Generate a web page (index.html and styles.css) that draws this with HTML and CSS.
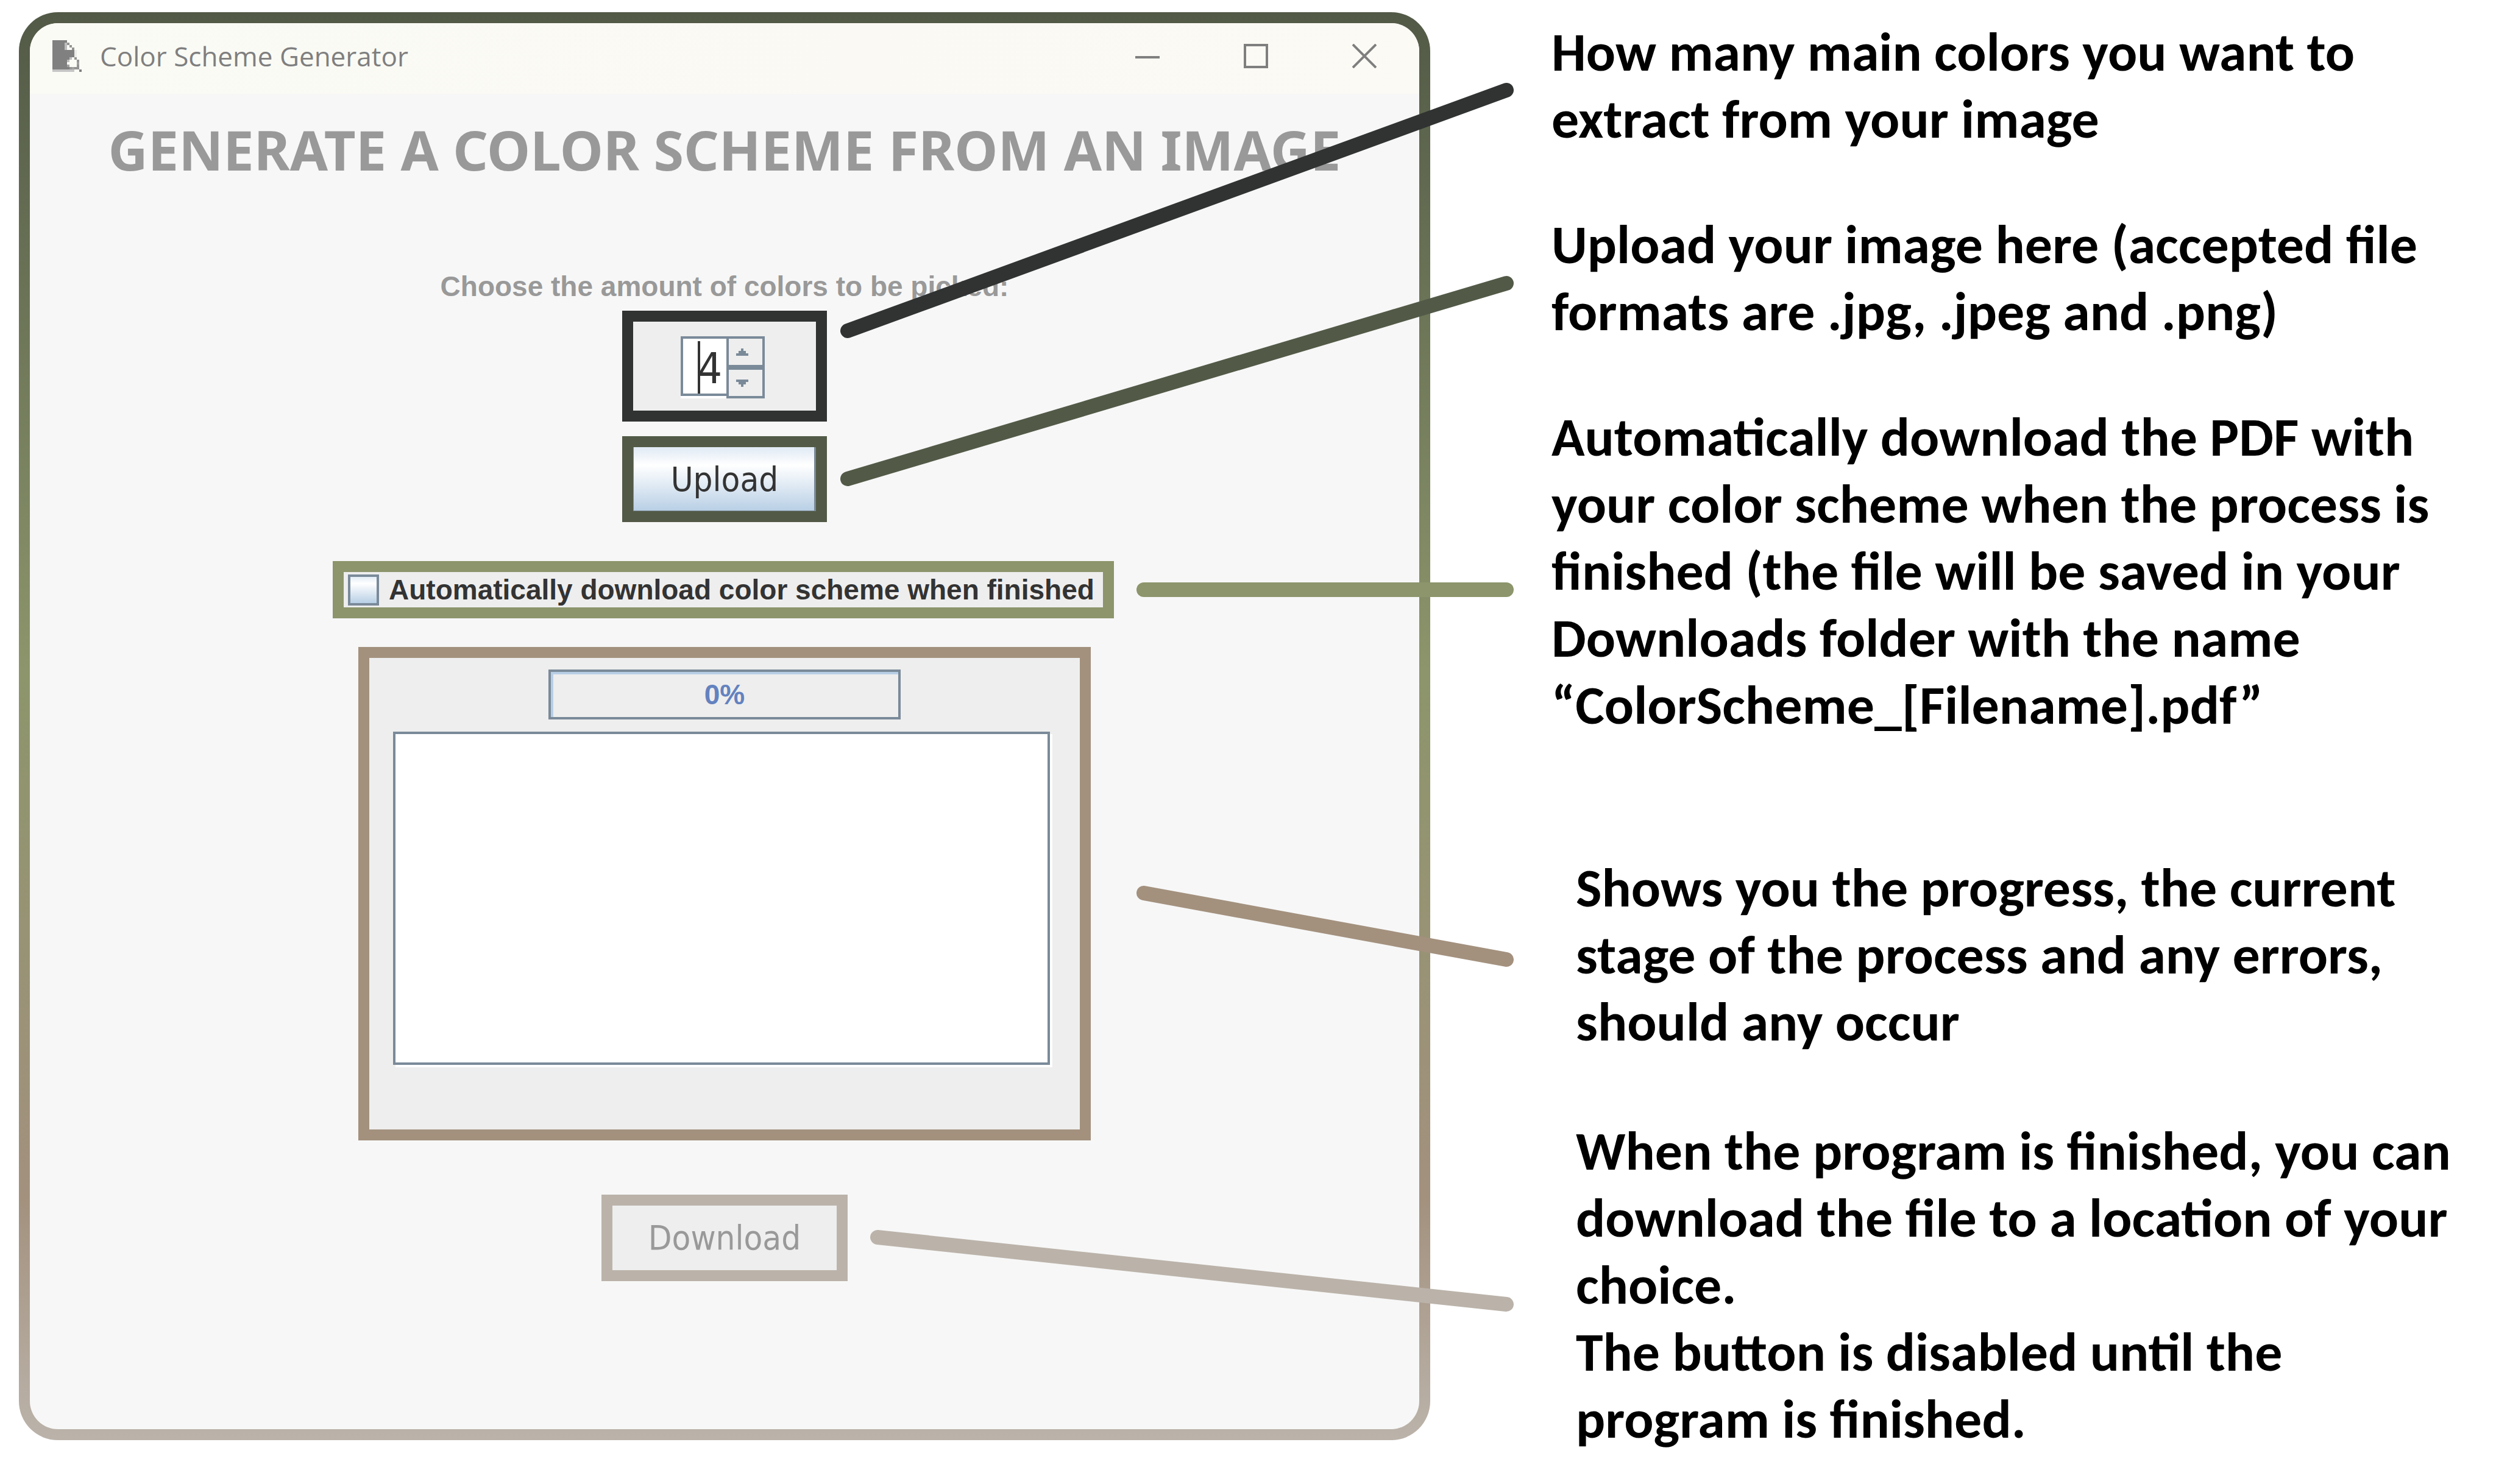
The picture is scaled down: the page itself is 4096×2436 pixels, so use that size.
FILE: index.html
```html
<!DOCTYPE html>
<html lang="en">
<head>
<meta charset="utf-8">
<title>Color Scheme Generator</title>
<link rel="stylesheet" href="styles.css">
</head>
<body>
<main class="guide">
  <section class="frame">
    <div class="window">
      <header class="titlebar">
        <svg class="app-icon" viewBox="0 0 12 13" shape-rendering="crispEdges" aria-hidden="true">
          <path fill="#808080" d="M0 0H6V1H5V4H9V7H7V8H6V11H7V12H0Z"/>
          <path fill="#949494" d="M6 1h1v1H6ZM7 2h1v1H7ZM8 3h1v1H8ZM9 7h1v1H9ZM10 8h1v1h-1ZM10 10h1v1h-1ZM9 11h2v1H9ZM7 11h1v1H7Z"/>
          <path fill="#a2a2a2" d="M10 9h1v1h-1ZM6 10h1v1H6ZM8 11h1v1H8Z"/>
          <path fill="#bdbdbd" d="M5 1h1v3H5ZM7 7h1v1H7ZM6 8h1v1H6Z"/>
          <path fill="#c5c5c5" d="M0 12h9v1H0Z"/>
          <path fill="#ebebe8" d="M9 4h1v3H9Z"/>
          <path fill="#808080" d="M11 12h1v1h-1Z"/>
        </svg>
        <span class="app-name">Color Scheme Generator</span>
        <button class="win-btn" type="button" aria-label="Minimize"><svg viewBox="0 0 40 40"><path d="M0 22H40"/></svg></button>
        <button class="win-btn" type="button" aria-label="Maximize"><svg viewBox="0 0 40 40"><path d="M2 2H38V38H2Z"/></svg></button>
        <button class="win-btn" type="button" aria-label="Close"><svg viewBox="0 0 40 40"><path d="M1 1L39 39M39 1L1 39"/></svg></button>
      </header>
      <form class="content">
        <h1 class="heading">GENERATE A COLOR SCHEME FROM AN IMAGE</h1>
        <label class="amount-label" for="amount">Choose the amount of colors to be picked:</label>
        <div class="mark mark-amount">
          <div class="spinner">
            <div class="spinner-field"><input id="amount" type="text" value="4"></div>
            <div class="spinner-steps">
              <button type="button" aria-label="More"><svg viewBox="0 0 5 3" shape-rendering="crispEdges"><path d="M2 0h1v1h1v1h1v1H0V2h1V1h1Z"/></svg></button>
              <button type="button" aria-label="Fewer"><svg viewBox="0 0 5 3" shape-rendering="crispEdges"><path d="M0 0h5v1H4v1H3v1H2V2H1V1H0Z"/></svg></button>
            </div>
          </div>
        </div>
        <button class="mark upload" type="button">Upload</button>
        <div class="mark mark-auto">
          <input class="check" id="auto" type="checkbox">
          <label for="auto">Automatically download color scheme when finished</label>
        </div>
        <div class="mark mark-progress">
          <div class="progress" role="progressbar" aria-label="Progress" aria-valuenow="0">0%</div>
          <textarea class="log" aria-label="Log" readonly></textarea>
        </div>
        <button class="mark download" type="button" disabled>Download</button>
      </form>
    </div>
  </section>
  <section class="notes">
    <p>How many main colors you want to extract from your image</p>
    <p>Upload your image here (accepted file formats are .jpg, .jpeg and .png)</p>
    <p>Automatically download the PDF with your color scheme when the process is finished (the file will be saved in your Downloads folder with the name “ColorScheme_[Filename].pdf”</p>
    <p class="note-progress">Shows you the progress, the current stage of the process and any errors, should any occur</p>
    <p class="note-download">When the program is finished, you can download the file to a location of your choice.<br>The button is disabled until the program is finished.</p>
  </section>
  <svg class="pointers" viewBox="0 0 4096 2436" aria-hidden="true">
    <path stroke="#303332" d="M1391 543L2472 148"/>
    <path stroke="#525a47" d="M1391 786L2472 465"/>
    <path stroke="#8c956b" d="M1877 968H2472"/>
    <path stroke="#a3917e" d="M1877 1466L2472 1575"/>
    <path stroke="#bbb3aa" d="M1440 2031L2472 2141"/>
  </svg>
</main>
</body>
</html>
```
FILE: styles.css
```css
* { box-sizing: border-box; }

body {
  margin: 0;
  background: #fff;
}

button, input, textarea {
  margin: 0;
  padding: 0;
  border: 0;
  border-radius: 0;
  outline: 0;
  appearance: none;
  resize: none;
}

.guide {
  position: relative;
  display: grid;
  grid-template-columns: minmax(0, 2316fr) minmax(0, 1749fr);
  padding: 20px 0 50px 31px;
}

.frame {
  align-self: start;
  padding: 18px;
  border-radius: 64px;
  background: linear-gradient(#525a47 0%, #8c956b 46%, #a3917e 83%, #bbb3aa 100%);
}

.window {
  overflow: hidden;
  border-radius: 46px;
  background: #f7f7f7;
}

.titlebar {
  display: flex;
  align-items: center;
  gap: 138px;
  height: 116px;
  padding: 0 70px 8px 37px;
  background: linear-gradient(90deg, #fafbf5, #fbf9f4 60%, #fbfaf4);
}

.app-icon {
  width: 48px;
  height: 52px;
  margin-right: -108px;
}

.app-name {
  flex: 1;
  color: #7f7f7f;
  font: 44px/64px "Open Sans", sans-serif;
}

.win-btn {
  width: 40px;
  height: 40px;
  background: none;
}

.win-btn svg {
  display: block;
  fill: none;
  stroke: #7f7f7f;
  stroke-width: 4;
}

.content {
  display: flex;
  flex-direction: column;
  align-items: center;
  padding: 31px 0 243px;
}

.heading {
  margin: 0;
  color: #999;
  font: bold 90px/120px "Noto Sans", sans-serif;
  white-space: nowrap;
}

.amount-label {
  margin: 135px 0 10px;
  color: #999;
  font: bold 46px/60px "Liberation Sans", sans-serif;
}

.mark { border: 18px solid; }

.mark-amount {
  display: flex;
  justify-content: center;
  width: 336px;
  height: 182px;
  padding: 24px 6px 0 0;
  border-color: #303332;
  background: #eee;
}

.spinner {
  display: flex;
  width: 138px;
  height: 102px;
}

.spinner-field {
  position: relative;
  width: 75px;
  border-bottom: 4px solid #fff;
}

.spinner-field::after {
  content: "";
  position: absolute;
  left: 28px;
  top: 8px;
  width: 4px;
  height: 86px;
  background: #333;
}

.spinner-field input {
  width: 100%;
  height: 98px;
  padding: 8px 0 0 24px;
  border: 4px solid #7a8a99;
  border-right: 0;
  background: #fff;
  color: #333;
  font: 70px/80px "DejaVu Sans Condensed", sans-serif;
}

.spinner-steps {
  display: flex;
  flex: 1;
  flex-direction: column;
}

.spinner-steps button {
  flex: 1;
  padding: 0 12px 0 0;
  border: 4px solid #7a8a99;
  background: #eee;
}

.spinner-steps svg {
  width: 20px;
  height: 12px;
  display: block;
  margin: 0 auto;
  fill: #7a8a99;
}

.upload, .download {
  font: 56px/64px "DejaVu Sans Condensed", sans-serif;
}

.upload {
  width: 336px;
  height: 141px;
  margin-top: 24px;
  border-color: #525a47;
  background: linear-gradient(#dfe9f4, #fff 28%, #b8cfe5) padding-box;
  box-shadow: inset -3px -1px #7a8a99, inset 1px 0 #7a8a99;
  color: #333;
}

.mark-auto {
  display: flex;
  align-items: center;
  gap: 16px;
  width: 1282px;
  height: 94px;
  margin: 64px 4px 0 0;
  padding-left: 7px;
  border-color: #8c956b;
  background: #eee;
  color: #333;
  font: bold 46px/56px "Liberation Sans", sans-serif;
  white-space: nowrap;
}

.check {
  width: 51px;
  height: 51px;
  border: 4px solid #7a8a99;
  background: linear-gradient(#e3edf6, #fff 25%, #b8cfe5);
}

.mark-progress {
  display: flex;
  flex-direction: column;
  align-items: center;
  gap: 20px;
  width: 1202px;
  height: 810px;
  margin-top: 47px;
  padding-top: 19px;
  border-color: #a3917e;
  background: #eee;
}

.progress {
  width: 578px;
  height: 82px;
  border: 4px solid #7a8a99;
  box-shadow: inset 4px 4px #b8cfe5;
  color: #6382bf;
  font: bold 46px/74px "Liberation Sans", sans-serif;
  text-align: center;
}

.log {
  width: 1078px;
  height: 547px;
  margin-right: 10px;
  border: 4px solid #7a8a99;
  background: #fff;
  box-shadow: 4px 4px #fff;
}

.download {
  width: 404px;
  height: 142px;
  margin-top: 89px;
  border-color: #bbb3aa;
  background: #eee;
  color: #999;
}

.notes {
  padding: 10px 36px 0 199px;
  color: #000;
  font: bold 90px/110px "Carlito", "Lato", sans-serif;
}

.notes p { margin: 0 0 96px; }

.notes .note-progress {
  margin: 190px 0 102px;
  padding-left: 40px;
}

.notes .note-download {
  margin: 0;
  padding-left: 40px;
}

.pointers {
  position: absolute;
  top: 0;
  left: 0;
  width: 100%;
  fill: none;
  stroke-width: 24;
  stroke-linecap: round;
}
```
